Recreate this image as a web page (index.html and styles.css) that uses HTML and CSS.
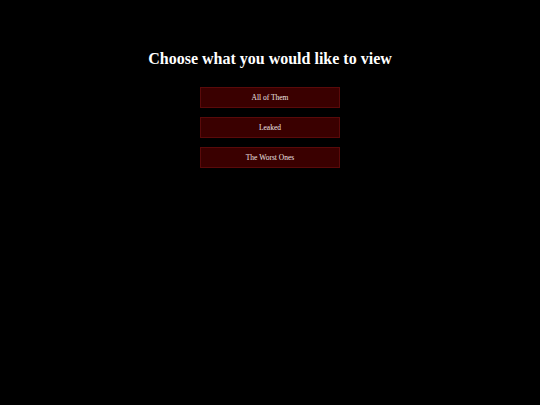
FILE: index.html
```html
<!DOCTYPE html>
<html>
<head>
<meta charset="utf-8">
<link rel="stylesheet" href="styles.css">
</head>
<body>
<main class="page">
  <h1 class="title">Choose what you would like to view</h1>
  <nav class="choices">
    <a class="choice" href="#">All of Them</a>
    <a class="choice" href="#">Leaked</a>
    <a class="choice" href="#">The Worst Ones</a>
  </nav>
</main>
</body>
</html>
```
FILE: styles.css
```css
html, body {
  margin: 0;
  padding: 0;
  background: #000;
  height: 100%;
}
.page {
  display: flex;
  flex-direction: column;
  align-items: center;
  padding-top: 49px;
  font-family: "Liberation Serif", serif;
}
.title {
  margin: 0;
  color: #fff;
  font-size: 16px;
  font-weight: bold;
  line-height: 20px;
}
.choices {
  display: flex;
  flex-direction: column;
  gap: 9px;
  margin-top: 18px;
}
.choice {
  box-sizing: border-box;
  width: 140px;
  height: 21px;
  display: flex;
  align-items: center;
  justify-content: center;
  background: #3a0000;
  border: 1px solid #5a0a0a;
  color: #eee6e6;
  font-family: "Liberation Serif", serif;
  font-size: 7.5px;
  text-decoration: none;
}
```
